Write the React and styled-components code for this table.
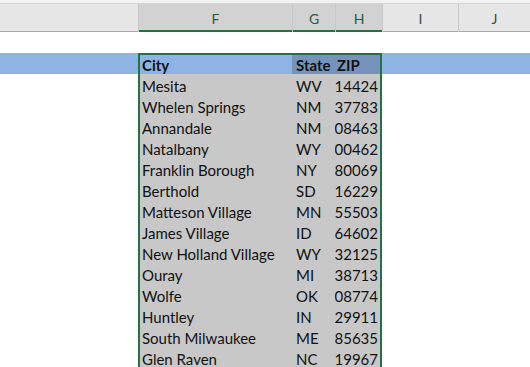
import styled, { createGlobalStyle } from 'styled-components';

const GlobalStyle = createGlobalStyle`
  html, body {
    margin: 0;
    padding: 0;
    background: #ffffff;
    overflow: hidden;
  }
`;

const COLS = '138px 154px 43px 47px 76px 1fr';
const GREEN = '#217346';

const rows = [
  ['Mesita', 'WV', '14424'],
  ['Whelen Springs', 'NM', '37783'],
  ['Annandale', 'NM', '08463'],
  ['Natalbany', 'WY', '00462'],
  ['Franklin Borough', 'NY', '80069'],
  ['Berthold', 'SD', '16229'],
  ['Matteson Village', 'MN', '55503'],
  ['James Village', 'ID', '64602'],
  ['New Holland Village', 'WY', '32125'],
  ['Ouray', 'MI', '38713'],
  ['Wolfe', 'OK', '08774'],
  ['Huntley', 'IN', '29911'],
  ['South Milwaukee', 'ME', '85635'],
  ['Glen Raven', 'NC', '19967'],
];

const Sheet = styled.div`
  width: 530px;
  height: 367px;
  overflow: hidden;
  font-family: Lato, 'Liberation Sans', sans-serif;
  background: #ffffff;
`;

const TopStrip = styled.div`
  height: 3px;
  background: #f3f3f3;
  border-bottom: 1px solid #d4d4d4;
`;

const HeaderBar = styled.div`
  display: grid;
  grid-template-columns: ${COLS};
  height: 28px;
`;

const ColHead = styled.div`
  display: flex;
  align-items: center;
  justify-content: center;
  font-size: 14px;
  color: ${(p) => (p.$selected ? '#2a5a3c' : '#444444')};
  background: ${(p) => (p.$selected ? '#d2d2d2' : '#e6e6e6')};
  border-left: ${(p) => (p.$first ? 'none' : '1px solid #c8c8c8')};
  box-shadow: ${(p) =>
    p.$selected ? `inset 0 -2px 0 ${GREEN}` : 'inset 0 -1px 0 #a8a8a8'};
`;

const Row = styled.div`
  display: grid;
  grid-template-columns: ${COLS};
  height: 21px;
  background: ${(p) => (p.$highlight ? '#8eb4e3' : '#ffffff')};
`;

const edgeShadow = (p) => {
  const s = [];
  if (p.$left) s.push(`inset 2px 0 0 ${GREEN}`);
  if (p.$right) s.push(`inset -2px 0 0 ${GREEN}`);
  if (p.$top) s.push(`inset 0 2px 0 ${GREEN}`);
  return s.length ? s.join(', ') : 'none';
};

const Cell = styled.div`
  display: flex;
  align-items: center;
  justify-content: ${(p) => (p.$num ? 'flex-end' : 'flex-start')};
  padding: ${(p) => (p.$num ? '2px 4px 0 0' : '2px 0 0 4px')};
  font-size: 15px;
  font-weight: ${(p) => (p.$bold ? 700 : 400)};
  color: #111111;
  white-space: nowrap;
  overflow: hidden;
  background: ${(p) => p.$bg || 'transparent'};
  box-shadow: ${edgeShadow};
`;

const Empty = styled.div``;

export default function App() {
  return (
    <Sheet>
      <GlobalStyle />
      <TopStrip />
      <HeaderBar>
        <ColHead $first />
        <ColHead $selected>F</ColHead>
        <ColHead $selected>G</ColHead>
        <ColHead $selected>H</ColHead>
        <ColHead>I</ColHead>
        <ColHead>J</ColHead>
      </HeaderBar>
      <Row />
      <Row $highlight>
        <Empty />
        <Cell $bold $left $top $bg="#8eb4e3">City</Cell>
        <Cell $bold $top $bg="#7694bb">State</Cell>
        <Cell $bold $top $right $bg="#7694bb" style={{ justifyContent: 'flex-start', paddingLeft: 2 }}>ZIP</Cell>
        <Empty />
        <Empty />
      </Row>
      {rows.map(([city, st, zip]) => (
        <Row key={city}>
          <Empty />
          <Cell $left $bg="#c8c8c8">{city}</Cell>
          <Cell $bg="#c8c8c8">{st}</Cell>
          <Cell $num $right $bg="#c8c8c8">{zip}</Cell>
          <Empty />
          <Empty />
        </Row>
      ))}
    </Sheet>
  );
}
